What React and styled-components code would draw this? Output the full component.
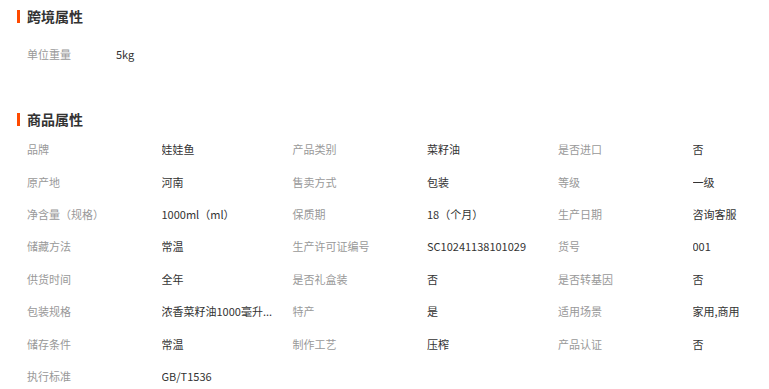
import styled, { createGlobalStyle } from "styled-components";

const GlobalStyle = createGlobalStyle`
    html, body {
        margin: 0;
        padding: 0;
        background: #fff;
        overflow: hidden;
    }
    body {
        font-family: "Noto Sans CJK SC", "Liberation Sans", sans-serif;
    }
`

const crossBorder = [{ label: "单位重量", value: "5kg" }];

const attrs = [
    ["品牌", "娃娃鱼"], ["产品类别", "菜籽油"], ["是否进口", "否"],
    ["原产地", "河南"], ["售卖方式", "包装"], ["等级", "一级"],
    ["净含量（规格）", "1000ml（ml）"], ["保质期", "18（个月）"], ["生产日期", "咨询客服"],
    ["储藏方法", "常温"], ["生产许可证编号", "SC10241138101029"], ["货号", "001"],
    ["供货时间", "全年"], ["是否礼盒装", "否"], ["是否转基因", "否"],
    ["包装规格", "浓香菜籽油1000毫升装"], ["特产", "是"], ["适用场景", "家用,商用"],
    ["储存条件", "常温"], ["制作工艺", "压榨"], ["产品认证", "否"],
    ["执行标准", "GB/T1536"],
];

// cut long values to about 9.5 CJK widths, then add "..."
const MAX_WIDTH = 9.5;
const clip = (text) => {
    let width = 0;
    let out = "";
    for (const ch of text) {
        width += ch.charCodeAt(0) < 128 ? 0.55 : 1;
        if (width > MAX_WIDTH) return out + "...";
        out += ch;
    }
    return text;
};

export default function App(){
    return (
        <Page>
            <GlobalStyle />
            <Title>跨境属性</Title>
            <SimpleRow>
                {crossBorder.map(item => (
                    <Pair key={item.label}>
                        <Label $width={89}>{item.label}</Label>
                        <Value>{item.value}</Value>
                    </Pair>
                ))}
            </SimpleRow>
            <Title $top={39}>商品属性</Title>
            <Grid>
                {attrs.map(([label, value]) => (
                    <Cell key={label}>
                        <Label>{label}</Label>
                        <Value title={value}>{clip(value)}</Value>
                    </Cell>
                ))}
            </Grid>
        </Page>
    );
}

const Page = styled.div `
    padding: 6px 0 0 17px;
    width: 769px;
    box-sizing: border-box;
`

const Title = styled.h3 `
    display: flex;
    align-items: center;
    margin: ${p => p.$top || 0}px 0 0 0;
    height: 20px;
    font-size: 14px;
    font-weight: bold;
    color: #333;
    letter-spacing: 0;

    &::before {
        content: "";
        width: 3px;
        height: 13px;
        background: #ff4a00;
        margin-right: 7px;
    }
`

const SimpleRow = styled.div `
    margin: 12px 0 0 10px;
`

const Pair = styled.div `
    display: flex;
    height: 32px;
    align-items: center;
`

const Grid = styled.div `
    display: grid;
    grid-template-columns: 134.5px 131px 134.5px 131px 134.5px 1fr;
    grid-auto-rows: 32.4px;
    margin: 4px 0 0 10px;
`

const Cell = styled.div `
    display: contents;
`

const Label = styled.span `
    display: flex;
    align-items: center;
    ${p => p.$width ? `width: ${p.$width}px;` : ""}
    font-size: 11px;
    color: #999;
    white-space: nowrap;
`

const Value = styled.span `
    display: block;
    align-self: center;
    font-size: 11px;
    color: #333;
    white-space: nowrap;
    overflow: hidden;
    padding-right: 12px;
    min-width: 0;
`
